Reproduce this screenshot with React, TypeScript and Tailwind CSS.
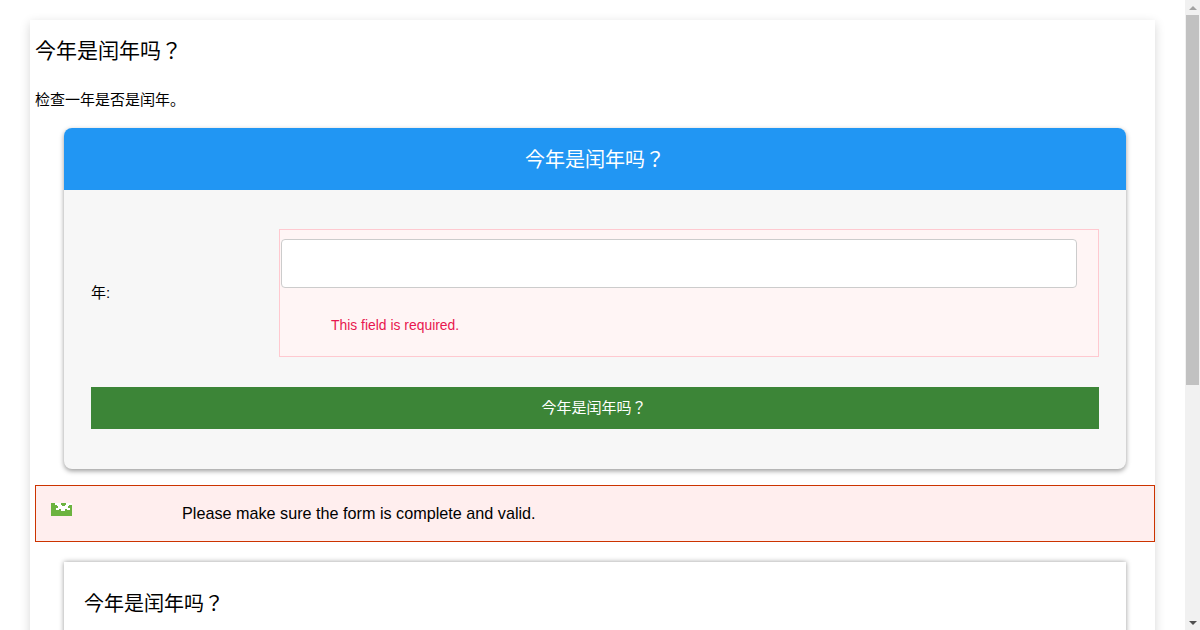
const cjk = "font-['Liberation_Sans','Noto_Sans_CJK_JP',sans-serif]";

function AlertIcon() {
  return (
    <svg width="21" height="13" viewBox="0 0 21 13" shapeRendering="crispEdges" className="shrink-0">
      <rect x="0" y="0" width="21" height="13" fill="#6cb33f" />
      <path
        d="M4 0h6v2h1v1h3v-1h1v-2h6v2h-3v1h-1v2h2v2h-3v-1h-2v2h-4v-2h-2v1h-3v-2h2v-2h-1v-1h-2z"
        fill="#fff"
      />
    </svg>
  );
}

function Scrollbar() {
  return (
    <div className="w-[15px] h-[630px] bg-[#f1f1f1] flex flex-col items-center shrink-0">
      <div className="h-[15px] flex items-center justify-center">
        <div className="w-0 h-0 border-x-[4px] border-x-transparent border-b-[4px] border-b-[#a3a3a3]" />
      </div>
      <div className="w-[13px] h-[370px] bg-[#c1c1c1]" />
      <div className="flex-1" />
      <div className="h-[15px] flex items-center justify-center">
        <div className="w-0 h-0 border-x-[4px] border-x-transparent border-t-[4px] border-t-[#505050]" />
      </div>
    </div>
  );
}

export default function App() {
  return (
    <div className={`flex h-[630px] w-[1200px] overflow-hidden bg-white text-black ${cjk}`}>
      <div className="w-[1185px] shrink-0 pl-[30px] pr-[30px] pt-[20px]">
        <div className="h-[700px] bg-white pl-[5px] shadow-[0_3px_10px_rgba(0,0,0,0.16)]">
          <h1 className="pt-[16px] text-[21px] leading-[30px] font-normal">今年是闰年吗？</h1>
          <p className="mt-[24px] text-[15px] leading-[20px]">检查一年是否是闰年。</p>

          <div className="ml-[29px] mr-[29px] mt-[18px] h-[341px] overflow-hidden rounded-[8px] bg-[#f7f7f7] shadow-[0_2px_5px_rgba(0,0,0,0.4)]">
            <div className="h-[62px] bg-[#2196f3] flex items-center justify-center pt-[1px] text-[20px] text-white">
              今年是闰年吗？
            </div>
            <div className="px-[27px] pt-[39px]">
              <div className="flex items-center">
                <label className="w-[188px] pt-[1px] text-[15px]">年:</label>
                <div className="h-[128px] flex-1 border border-[#ffc9d0] bg-[#fff5f5] pl-[1px] pr-[21px] pt-[9px]">
                  <input className="block h-[49px] w-full rounded-[4px] border border-[#cccccc] bg-white" />
                  <div className="mt-[28px] pl-[50px] text-[13.9px] leading-[18px] text-[#e8174f]">This field is required.</div>
                </div>
              </div>
              <button className="mt-[30px] h-[42px] w-full bg-[#3c8537] pt-[1px] pr-[2px] text-[15px] text-white">今年是闰年吗？</button>
            </div>
          </div>

          <div className="mt-[16px] flex h-[57px] border border-[#cc3300] bg-[#ffeeee] pl-[15px]">
            <div className="w-[131px] pt-[17px]">
              <AlertIcon />
            </div>
            <div className="pt-[17px] text-[16.2px] leading-[20px]">Please make sure the form is complete and valid.</div>
          </div>

          <div className="ml-[29px] mr-[29px] mt-[20px] h-[200px] bg-white px-[20px] pt-[27px] shadow-[0_0_5px_rgba(0,0,0,0.4)]">
            <h2 className="text-[20px] leading-[30px] font-normal">今年是闰年吗？</h2>
          </div>
        </div>
      </div>
      <Scrollbar />
    </div>
  );
}
